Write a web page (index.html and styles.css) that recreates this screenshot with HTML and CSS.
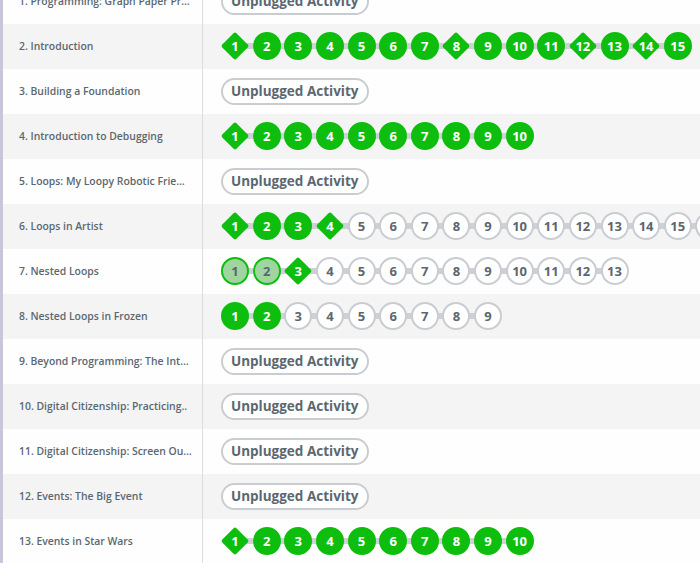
FILE: index.html
```html
<!DOCTYPE html>
<html lang="en">
<head>
<meta charset="utf-8">
<title>Progress</title>
<link rel="stylesheet" href="styles.css">
</head>
<body>
<div class="table">
  <div class="row">
    <div class="name">1. Programming: Graph Paper Pr…</div>
    <div class="progress"><span class="pill">Unplugged Activity</span></div>
  </div>
  <div class="row">
    <div class="name">2. Introduction</div>
    <div class="progress"><div class="bubbles">
      <span class="b diamond perfect"><i>1</i></span>
      <span class="b perfect">2</span>
      <span class="b perfect">3</span>
      <span class="b perfect">4</span>
      <span class="b perfect">5</span>
      <span class="b perfect">6</span>
      <span class="b perfect">7</span>
      <span class="b diamond perfect"><i>8</i></span>
      <span class="b perfect">9</span>
      <span class="b perfect">10</span>
      <span class="b perfect">11</span>
      <span class="b diamond perfect"><i>12</i></span>
      <span class="b perfect">13</span>
      <span class="b diamond perfect"><i>14</i></span>
      <span class="b perfect">15</span>
    </div></div>
  </div>
  <div class="row">
    <div class="name">3. Building a Foundation</div>
    <div class="progress"><span class="pill">Unplugged Activity</span></div>
  </div>
  <div class="row">
    <div class="name">4. Introduction to Debugging</div>
    <div class="progress"><div class="bubbles">
      <span class="b diamond perfect"><i>1</i></span>
      <span class="b perfect">2</span>
      <span class="b perfect">3</span>
      <span class="b perfect">4</span>
      <span class="b perfect">5</span>
      <span class="b perfect">6</span>
      <span class="b perfect">7</span>
      <span class="b perfect">8</span>
      <span class="b perfect">9</span>
      <span class="b perfect">10</span>
    </div></div>
  </div>
  <div class="row">
    <div class="name">5. Loops: My Loopy Robotic Frie…</div>
    <div class="progress"><span class="pill">Unplugged Activity</span></div>
  </div>
  <div class="row">
    <div class="name">6. Loops in Artist</div>
    <div class="progress"><div class="bubbles">
      <span class="b diamond perfect"><i>1</i></span>
      <span class="b perfect">2</span>
      <span class="b perfect">3</span>
      <span class="b diamond perfect"><i>4</i></span>
      <span class="b">5</span>
      <span class="b">6</span>
      <span class="b">7</span>
      <span class="b">8</span>
      <span class="b">9</span>
      <span class="b">10</span>
      <span class="b">11</span>
      <span class="b">12</span>
      <span class="b">13</span>
      <span class="b">14</span>
      <span class="b">15</span>
      <span class="b">16</span>
      <span class="b">17</span>
    </div></div>
  </div>
  <div class="row">
    <div class="name">7. Nested Loops</div>
    <div class="progress"><div class="bubbles">
      <span class="b attempted">1</span>
      <span class="b attempted">2</span>
      <span class="b diamond perfect"><i>3</i></span>
      <span class="b">4</span>
      <span class="b">5</span>
      <span class="b">6</span>
      <span class="b">7</span>
      <span class="b">8</span>
      <span class="b">9</span>
      <span class="b">10</span>
      <span class="b">11</span>
      <span class="b">12</span>
      <span class="b">13</span>
    </div></div>
  </div>
  <div class="row">
    <div class="name">8. Nested Loops in Frozen</div>
    <div class="progress"><div class="bubbles">
      <span class="b perfect">1</span>
      <span class="b perfect">2</span>
      <span class="b">3</span>
      <span class="b">4</span>
      <span class="b">5</span>
      <span class="b">6</span>
      <span class="b">7</span>
      <span class="b">8</span>
      <span class="b">9</span>
    </div></div>
  </div>
  <div class="row">
    <div class="name">9. Beyond Programming: The Int…</div>
    <div class="progress"><span class="pill">Unplugged Activity</span></div>
  </div>
  <div class="row">
    <div class="name">10. Digital Citizenship: Practicing..</div>
    <div class="progress"><span class="pill">Unplugged Activity</span></div>
  </div>
  <div class="row">
    <div class="name">11. Digital Citizenship: Screen Ou…</div>
    <div class="progress"><span class="pill">Unplugged Activity</span></div>
  </div>
  <div class="row">
    <div class="name">12. Events: The Big Event</div>
    <div class="progress"><span class="pill">Unplugged Activity</span></div>
  </div>
  <div class="row">
    <div class="name">13. Events in Star Wars</div>
    <div class="progress"><div class="bubbles">
      <span class="b diamond perfect"><i>1</i></span>
      <span class="b perfect">2</span>
      <span class="b perfect">3</span>
      <span class="b perfect">4</span>
      <span class="b perfect">5</span>
      <span class="b perfect">6</span>
      <span class="b perfect">7</span>
      <span class="b perfect">8</span>
      <span class="b perfect">9</span>
      <span class="b perfect">10</span>
    </div></div>
  </div>
</div>
</body>
</html>
```
FILE: styles.css
```css
html, body {
  margin: 0;
  padding: 0;
  background: #fff;
  overflow: hidden;
}
body {
  font-family: "Open Sans", "Liberation Sans", sans-serif;
  color: #5b6770;
}
.table {
  margin-top: -21.5px;
  border-left: 3px solid #c9c6dc;
}
.row {
  display: flex;
  height: 45px;
  background: #fefefe;
}
.row:nth-child(even) {
  background: #f4f4f4;
}
.name {
  flex: 0 0 auto;
  width: 183px;
  padding-left: 16px;
  border-right: 1px solid #dcdcdc;
  display: flex;
  align-items: center;
  font-size: 10.4px;
  font-weight: 600;
  white-space: nowrap;
  overflow: hidden;
}
.progress {
  flex: 1 1 auto;
  min-width: 0;
  padding-left: 18px;
  display: flex;
  align-items: center;
  overflow: hidden;
  white-space: nowrap;
}
.pill {
  box-sizing: border-box;
  height: 27px;
  padding: 1px 9px 0 8px;
  border: 2px solid #c9cdd1;
  border-radius: 14px;
  background: #fff;
  font-size: 13.5px;
  font-weight: 700;
  display: flex;
  align-items: center;
  line-height: 1;
}
.bubbles {
  position: relative;
  display: flex;
  align-items: center;
  gap: 3.64px;
  height: 30px;
}
.bubbles::before {
  content: "";
  position: absolute;
  left: 14px;
  right: 14px;
  top: 12px;
  height: 6px;
  background: #cdd0d4;
}
.b {
  position: relative;
  box-sizing: border-box;
  flex: 0 0 auto;
  width: 28px;
  height: 28px;
  border: 2px solid #c9cdd1;
  border-radius: 50%;
  background: #fff;
  display: flex;
  align-items: center;
  justify-content: center;
  font-size: 13px;
  font-weight: 700;
  color: #5b6770;
  line-height: 1;
}
.b.perfect {
  background: #0ebe0e;
  border-color: #0ebe0e;
  color: #fff;
}
.b.attempted {
  background: #9fd59f;
  border-color: #0ebe0e;
  color: #5b6770;
}
.b.diamond {
  background: transparent;
  border: none;
  border-radius: 0;
}
.b.diamond::before {
  content: "";
  position: absolute;
  left: 4px;
  top: 4px;
  width: 20px;
  height: 20px;
  border-radius: 2px;
  background: #0ebe0e;
  transform: rotate(45deg);
}
.b.diamond i {
  position: relative;
  font-style: normal;
}
```
